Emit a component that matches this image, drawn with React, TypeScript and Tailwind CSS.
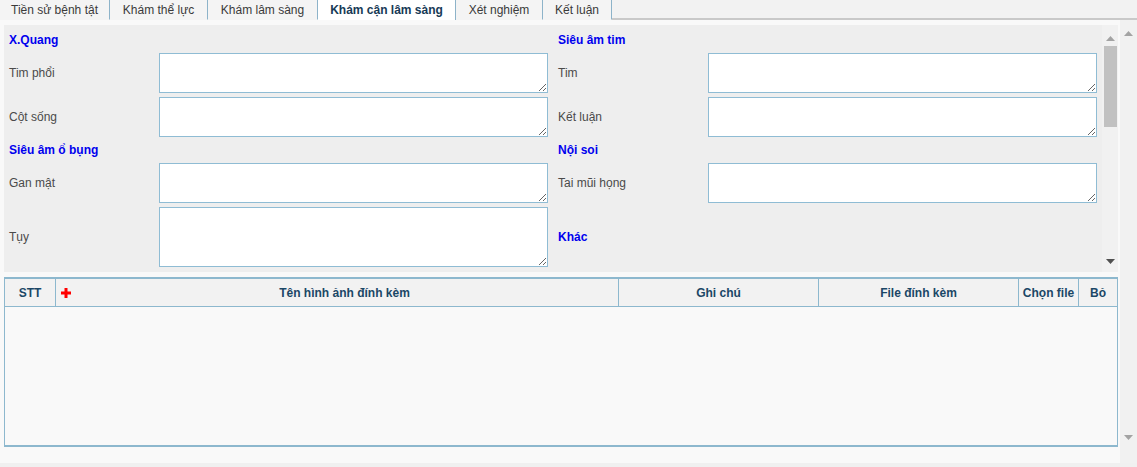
import React from "react";

const tabs = [
  { label: "Tiền sử bệnh tật", w: 110 },
  { label: "Khám thể lực", w: 98 },
  { label: "Khám lâm sàng", w: 110 },
  { label: "Khám cận lâm sàng", w: 138, active: true },
  { label: "Xét nghiệm", w: 87 },
  { label: "Kết luận", w: 69 },
];

function Heading({ children }: { children: React.ReactNode }) {
  return (
    <div className="h-[18px] flex items-center text-[12px] font-bold text-[#0000ee]">
      {children}
    </div>
  );
}

function Field({ label, h = 40 }: { label: string; h?: number }) {
  return (
    <div className="flex items-center" style={{ height: h }}>
      <div className="w-[150px] text-[12px] text-[#4a4a4a]">{label}</div>
      <textarea
        className="w-[389px] h-full bg-white border border-[#8fbcd4] outline-none"
      />
    </div>
  );
}

function Arrow({ up, color }: { up?: boolean; color: string }) {
  return (
    <svg width="9" height="5" viewBox="0 0 9 5">
      <path d={up ? "M0 5 L4.5 0 L9 5 Z" : "M0 0 L9 0 L4.5 5 Z"} fill={color} />
    </svg>
  );
}

export default function App() {
  return (
    <div className="w-[1137px] h-[467px] bg-[#f9f9f9] flex flex-col font-['Liberation_Sans',Arial,sans-serif] overflow-hidden">
      {/* ── Tabs ── */}
      <div className="h-[20px] flex bg-[#f3f3f3]">
        {tabs.map((t) => (
          <div
            key={t.label}
            style={{ width: t.w }}
            className={
              "h-full flex items-center justify-center border-r border-[#8db3c9] text-[12px] " +
              (t.active
                ? "bg-white font-bold text-[#173a56]"
                : "bg-[#f4f4f4] text-[#3a3a3a] border-b border-b-[#f4f4f4]")
            }
          >
            {t.label}
          </div>
        ))}
        <div className="flex-1 h-full border-b-2 border-[#c9c9c9] bg-[#f2f2f2]" />
      </div>

      {/* ── Body ── */}
      <div className="flex-1 flex min-h-0">
        <div className="flex-1 flex flex-col pl-[4px] pt-[5px] pr-[2px]">
          {/* form panel */}
          <div className="h-[247px] bg-[#eeeeee] flex overflow-hidden">
            <div className="flex-1 flex pl-[5px] pt-[6px] gap-[10px]">
              <div className="flex flex-col gap-[4px]">
                <Heading>X.Quang</Heading>
                <Field label="Tim phổi" />
                <Field label="Cột sống" />
                <Heading>Siêu âm ổ bụng</Heading>
                <Field label="Gan mật" />
                <Field label="Tụy" h={60} />
              </div>
              <div className="flex flex-col gap-[4px]">
                <Heading>Siêu âm tim</Heading>
                <Field label="Tim" />
                <Field label="Kết luận" />
                <Heading>Nội soi</Heading>
                <Field label="Tai mũi họng" />
                <div className="h-[60px] flex items-center text-[12px] font-bold text-[#0000ee]">
                  Khác
                </div>
              </div>
            </div>
            {/* inner scrollbar */}
            <div className="w-[16px] bg-[#f1f1f1] flex flex-col items-center pt-[11px] pb-[8px]">
              <Arrow up color="#a3a3a3" />
              <div className="mt-[5px] w-[13px] h-[81px] bg-[#c1c1c1]" />
              <div className="flex-1" />
              <Arrow color="#505050" />
            </div>
          </div>

          {/* attachments table */}
          <div className="mt-[5px] h-[170px] flex flex-col border-t-2 border-x border-b-2 border-[#8db8ce] bg-[#f9f9f9]">
            <div className="h-[28px] flex bg-[#f2f2f2] border-b border-[#8db8ce] text-[12px] font-bold text-[#1b4766]">
              <div className="w-[51px] flex items-center justify-center border-r border-[#8db8ce]">STT</div>
              <div className="w-[563px] flex items-center pl-[5px] border-r border-[#8db8ce]">
                <svg width="10" height="10" viewBox="0 0 10 10">
                  <rect x="3.5" y="0" width="3" height="10" fill="#ff0000" />
                  <rect x="0" y="3.5" width="10" height="3" fill="#ff0000" />
                </svg>
                <span className="flex-1 text-center">Tên hình ảnh đính kèm</span>
              </div>
              <div className="w-[200px] flex items-center justify-center border-r border-[#8db8ce]">Ghi chú</div>
              <div className="w-[200px] flex items-center justify-center border-r border-[#8db8ce]">File đính kèm</div>
              <div className="w-[60px] flex items-center justify-center border-r border-[#8db8ce]">Chọn file</div>
              <div className="flex-1 flex items-center justify-center">Bỏ</div>
            </div>
            <div className="flex-1" />
          </div>
        </div>

        {/* outer scrollbar */}
        <div className="w-[17px] bg-[#f1f1f1] flex flex-col items-center pt-[11px] pb-[23px]">
          <Arrow up color="#a3a3a3" />
          <div className="flex-1" />
          <Arrow color="#a3a3a3" />
        </div>
      </div>
      <div className="h-[4px] bg-[#f0f0f0]" />
    </div>
  );
}
